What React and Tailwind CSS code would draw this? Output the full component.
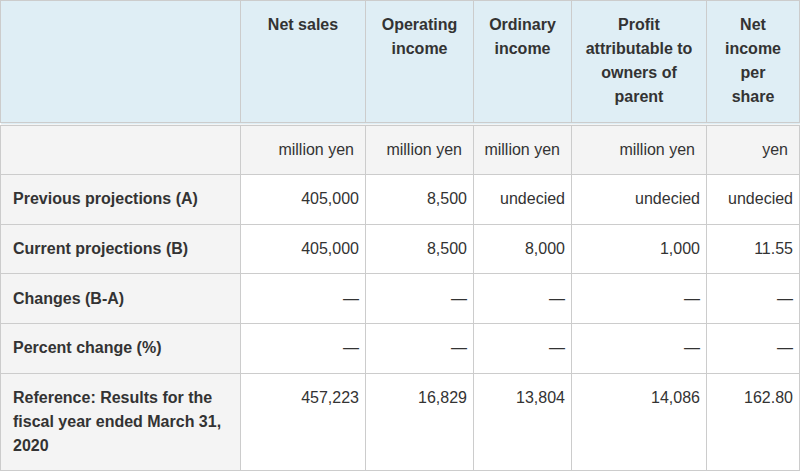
const COLS = [
  { title: 'Net sales', unit: 'million yen', w: 'w-[125px]' },
  { title: 'Operating income', unit: 'million yen', w: 'w-[108px]' },
  { title: 'Ordinary income', unit: 'million yen', w: 'w-[98px]' },
  { title: 'Profit attributable to owners of parent', unit: 'million yen', w: 'w-[135px]' },
  { title: 'Net income per share', unit: 'yen', w: 'w-[93px]' },
];

const ROWS = [
  { label: 'Previous projections (A)', values: ['405,000', '8,500', 'undecied', 'undecied', 'undecied'] },
  { label: 'Current projections (B)', values: ['405,000', '8,500', '8,000', '1,000', '11.55'] },
  { label: 'Changes (B-A)', values: ['—', '—', '—', '—', '—'] },
  { label: 'Percent change (%)', values: ['—', '—', '—', '—', '—'] },
  { label: 'Reference: Results for the fiscal year ended March 31, 2020', values: ['457,223', '16,829', '13,804', '14,086', '162.80'] },
];

export default function App() {
  return (
    <div className="w-[800px] bg-white text-[#333] font-['Liberation_Sans',Arial,sans-serif] text-[16px] leading-[24px]">
      <table className="w-[800px] table-fixed border-collapse border border-[#ccc]">
        <colgroup>
          <col className="w-[240px]" />
          {COLS.map(c => <col key={c.title} className={c.w} />)}
        </colgroup>
        <thead>
          <tr className="bg-[#dfeef5]">
            <th className="border border-b-4 border-double border-[#ccc] py-[12.3px]" />
            {COLS.map(c => (
              <th key={c.title} className="border border-b-4 border-double border-[#ccc] px-3 py-[12.3px] align-top text-center font-bold">
                {c.title}
              </th>
            ))}
          </tr>
        </thead>
        <tbody>
          <tr className="bg-[#f4f4f4]">
            <td className="border border-[#ccc] py-[12.3px]" />
            {COLS.map(c => (
              <td key={c.title} className="border border-[#ccc] py-[12.3px] pr-[11px] text-right align-top">{c.unit}</td>
            ))}
          </tr>
          {ROWS.map(r => (
            <tr key={r.label}>
              <td className="border border-[#ccc] bg-[#f4f4f4] px-3 py-[12.3px] align-top font-bold">{r.label}</td>
              {r.values.map((v, i) => (
                <td key={i} className="border border-[#ccc] py-[12.3px] pr-[6px] text-right align-top">{v}</td>
              ))}
            </tr>
          ))}
        </tbody>
      </table>
    </div>
  );
}
